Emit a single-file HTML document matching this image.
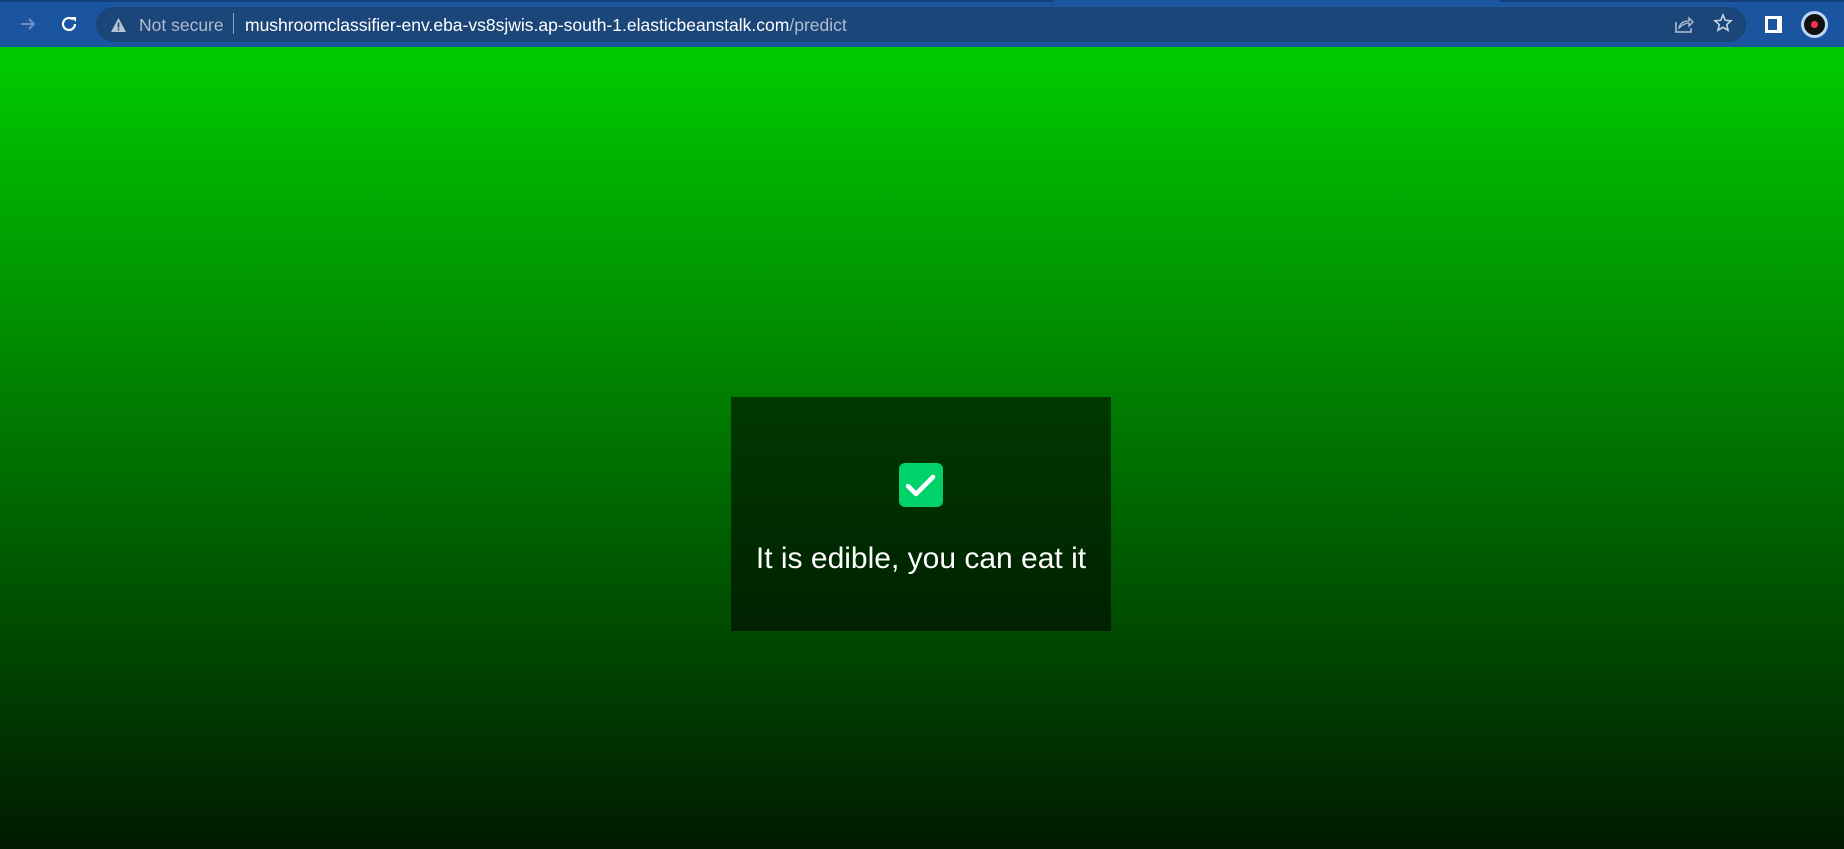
<!DOCTYPE html>
<html><head><meta charset="utf-8"><style>
*{margin:0;padding:0;box-sizing:border-box}
body{width:1844px;height:849px;overflow:hidden;font-family:"Liberation Sans",Arial,sans-serif;background:#1b55a0}
.top{position:absolute;left:0;top:0;width:1844px;height:2px;background:#133f78}
.tab{position:absolute;left:1053px;top:0;width:447px;height:2px;background:#1b55a0}
.bar{position:absolute;left:0;top:0;width:1844px;height:47px;background:#1b55a0}
.addr{position:absolute;left:96px;top:7px;width:1650px;height:35px;border-radius:18px;background:#1b4679}
.t{position:absolute;top:15px;font-size:17.5px;white-space:nowrap}
.main{position:absolute;left:0;top:47px;width:1844px;height:802px;background:linear-gradient(#00cc00,#007b00 45%,#001a00)}
.box{position:absolute;left:731px;top:397px;width:380px;height:234px;background:rgba(0,0,0,0.55)}
.chk{position:absolute;left:899px;top:463px;width:44px;height:44px;border-radius:6px;background:#00d26a}
.msg{position:absolute;left:731px;top:542px;width:380px;text-align:center;color:#fff;font-size:30px}
</style></head><body>
<div class="bar"></div><div class="top"></div><div class="tab"></div>
<svg style="position:absolute;left:18px;top:14px" width="20" height="20" viewBox="0 0 20 20"><path d="M3 10h13M11 5l5 5-5 5" stroke="#6f8fbf" stroke-width="2" fill="none"/></svg>
<svg style="position:absolute;left:59px;top:14px" width="20" height="20" viewBox="0 0 20 20"><path d="M16 10a6 6 0 1 1-2-4.5" stroke="#fff" stroke-width="2.2" fill="none"/><path d="M12 3h5v5z" fill="#fff"/></svg>
<div class="addr"></div>
<svg style="position:absolute;left:111px;top:18px" width="15" height="14" viewBox="0 0 15 14"><path d="M7.5 0L15 14H0z" fill="#b8c3d3"/><rect x="6.7" y="4.5" width="1.6" height="5" fill="#1b4679"/><rect x="6.7" y="10.7" width="1.6" height="1.6" fill="#1b4679"/></svg>
<div class="t" style="left:139px;color:#b0bccd">Not secure</div>
<div style="position:absolute;left:233px;top:13px;width:1px;height:21px;background:#8fa3c0"></div>
<div class="t" style="left:245px;color:#fff">mushroomclassifier-env.eba-vs8sjwis.ap-south-1.elasticbeanstalk.com<span style="color:#b0bccd">/predict</span></div>
<svg style="position:absolute;left:1674px;top:14px" width="20" height="20" viewBox="0 0 20 20"><path d="M2 8v10h15v-4" stroke="#b8c3d3" stroke-width="1.5" fill="none"/><path d="M5 14c1-5 5-7 10-7V4l4 4-4 4V9c-4 0-7 2-10 5z" stroke="#b8c3d3" stroke-width="1.3" fill="none"/></svg>
<svg style="position:absolute;left:1713px;top:13px" width="20" height="20" viewBox="0 0 20 20"><path d="M10 2l2.3 5.3 5.7.5-4.3 3.8 1.3 5.6L10 14.3 5 17.2l1.3-5.6L2 7.8l5.7-.5z" stroke="#c8d2e0" stroke-width="1.6" fill="none"/></svg>
<div style="position:absolute;left:1765px;top:16px;width:17px;height:17px;background:#fff"></div>
<div style="position:absolute;left:1768px;top:19px;width:9px;height:11px;background:#1b55a0"></div>
<div style="position:absolute;left:1801px;top:11px;width:27px;height:27px;border-radius:50%;background:#bcd8f4"></div>
<div style="position:absolute;left:1804px;top:14px;width:21px;height:21px;border-radius:50%;background:#111"></div>
<div style="position:absolute;left:1811px;top:21px;width:7px;height:7px;border-radius:50%;background:#ff3050"></div>
<div class="main"></div>
<div class="box"></div>
<div class="chk"><svg width="44" height="44" viewBox="0 0 44 44"><path d="M9 23l8 8 17-17" stroke="#fff" stroke-width="4.5" stroke-linecap="round" stroke-linejoin="round" fill="none"/></svg></div>
<div class="msg">It is edible, you can eat it</div>
</body></html>
